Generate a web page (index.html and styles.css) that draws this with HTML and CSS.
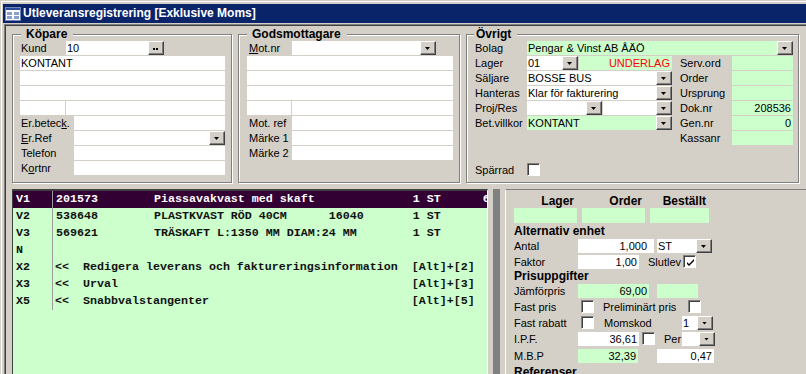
FILE: index.html
```html
<!DOCTYPE html>
<html lang="sv">
<head>
    <meta charset="UTF-8">
    <title>Utleveransregistrering</title>
    <link rel="stylesheet" href="styles.css">
</head>
<body>
<div class="window">
    <div class="titlebar">
        <svg class="title-icon" width="16" height="14" viewBox="0 0 16 14">
            <rect x="0.5" y="0.5" width="15" height="13" fill="#fff" stroke="#6f86b8"/>
            <rect x="1" y="1" width="14" height="2" fill="#2a4a9a"/>
            <rect x="2" y="5" width="5" height="3" fill="#8aa0cc"/>
            <rect x="9" y="5" width="5" height="3" fill="#8aa0cc"/>
            <rect x="2" y="9" width="5" height="3" fill="#8aa0cc"/>
            <rect x="9" y="9" width="5" height="3" fill="#8aa0cc"/>
        </svg>
        <span class="title-text">Utleveransregistrering [Exklusive Moms]</span>
    </div>
    <div class="client">
        <div class="client-inner">

            <!-- huvuduppgifter -->
            <div class="head-area">
                <fieldset class="group kopare">
                    <legend>Köpare</legend>
                    <div class="stack">
                        <div class="r">
                            <span class="lbl w46">Kund</span>
                            <div class="fld w82">10</div>
                            <span class="btn dots"></span>
                        </div>
                        <div class="r"><div class="fld grow">KONTANT</div></div>
                        <div class="r"><div class="fld grow"></div></div>
                        <div class="r"><div class="fld grow"></div></div>
                        <div class="r split">
                            <div class="fld w45"></div>
                            <div class="fld grow"></div>
                        </div>
                        <div class="r">
                            <span class="lbl w54">Er.betec<u>k</u>.</span>
                            <div class="fld grow"></div>
                        </div>
                        <div class="r">
                            <span class="lbl w54"><u>E</u>r.Ref</span>
                            <div class="fld grow sel"><span class="val"></span><span class="btn arrow"></span></div>
                        </div>
                        <div class="r">
                            <span class="lbl w54">Telefon</span>
                            <div class="fld grow"></div>
                        </div>
                        <div class="r">
                            <span class="lbl w54">K<u>o</u>rtnr</span>
                            <div class="fld grow"></div>
                        </div>
                    </div>
                </fieldset>

                <fieldset class="group gods">
                    <legend>Godsmottagare</legend>
                    <div class="stack">
                        <div class="r">
                            <span class="lbl w45"><u>M</u>ot.nr</span>
                            <div class="fld w144 sel"><span class="val"></span><span class="btn arrow"></span></div>
                        </div>
                        <div class="r"><div class="fld grow"></div></div>
                        <div class="r"><div class="fld grow"></div></div>
                        <div class="r"><div class="fld grow"></div></div>
                        <div class="r split">
                            <div class="fld w44"></div>
                            <div class="fld grow"></div>
                        </div>
                        <div class="r">
                            <span class="lbl w45">Mot. ref</span>
                            <div class="fld grow"></div>
                        </div>
                        <div class="r">
                            <span class="lbl w45">Märke 1</span>
                            <div class="fld grow"></div>
                        </div>
                        <div class="r">
                            <span class="lbl w45">Märke 2</span>
                            <div class="fld grow"></div>
                        </div>
                    </div>
                </fieldset>

                <fieldset class="group ovrigt">
                    <legend>Övrigt</legend>
                    <div class="ovr-grid">
                        <span class="lbl">Bolag</span>
                        <div class="fld green sel span3"><span class="val">Pengar &amp; Vinst AB ÅÄÖ</span><span class="btn arrow"></span></div>

                        <span class="lbl">Lager</span>
                        <div class="pair">
                            <div class="fld sel w51"><span class="val">01</span><span class="btn arrow"></span></div>
                            <div class="fld green grow num red">UNDERLAG</div>
                        </div>
                        <span class="lbl right-lbl">Serv.ord</span>
                        <div class="fld green"></div>

                        <span class="lbl">Säljare</span>
                        <div class="fld sel"><span class="val">BOSSE BUS</span><span class="btn arrow"></span></div>
                        <span class="lbl right-lbl">Order</span>
                        <div class="fld green"></div>

                        <span class="lbl">Hanteras</span>
                        <div class="fld sel"><span class="val">Klar för fakturering</span><span class="btn arrow"></span></div>
                        <span class="lbl right-lbl">Ursprung</span>
                        <div class="fld green"></div>

                        <span class="lbl">Proj/Res</span>
                        <div class="pair">
                            <div class="fld sel w75"><span class="val"></span><span class="btn arrow"></span></div>
                            <div class="fld sel grow"><span class="val"></span><span class="btn arrow"></span></div>
                        </div>
                        <span class="lbl right-lbl">Dok.nr</span>
                        <div class="fld green num">208536</div>

                        <span class="lbl">Bet.villkor</span>
                        <div class="fld green sel"><span class="val">KONTANT</span><span class="btn arrow"></span></div>
                        <span class="lbl right-lbl">Gen.nr</span>
                        <div class="fld green num">0</div>

                        <span class="lbl"></span>
                        <span></span>
                        <span class="lbl right-lbl">Kassanr</span>
                        <div class="fld green"></div>
                    </div>
                    <div class="sparr">
                        <span class="lbl w54">Spärrad</span>
                        <span class="chk"></span>
                    </div>
                </fieldset>
            </div>

            <!-- rader och artikeldetaljer -->
            <div class="lower">
                <div class="list">
                    <div class="lrow active"><span class="c1">V1</span><span class="c2">201573        Piassavakvast med skaft              1 ST      6,00</span></div>
                    <div class="lrow"><span class="c1">V2</span><span class="c2">538648        PLASTKVAST RÖD 40CM      16040       1 ST</span></div>
                    <div class="lrow"><span class="c1">V3</span><span class="c2">569621        TRÄSKAFT L:1350 MM DIAM:24 MM        1 ST</span></div>
                    <div class="lrow"><span class="c1">N</span><span class="c2"></span></div>
                    <div class="lrow"><span class="c1">X2</span><span class="c2 x">&lt;&lt;  Redigera leverans och faktureringsinformation  [Alt]+[2]</span></div>
                    <div class="lrow"><span class="c1">X3</span><span class="c2 x">&lt;&lt;  Urval                                          [Alt]+[3]</span></div>
                    <div class="lrow"><span class="c1">X5</span><span class="c2 x">&lt;&lt;  Snabbvalstangenter                             [Alt]+[5]</span></div>
                </div>

                <div class="splitter"><div class="bar"></div></div>

                <div class="panel">
                    <div class="prow head">
                        <span class="colhd w63">Lager</span>
                        <span class="colhd w63">Order</span>
                        <span class="colhd w59">Beställt</span>
                    </div>
                    <div class="prow greens">
                        <div class="fld green w63"></div>
                        <div class="fld green w63"></div>
                        <div class="fld green w59"></div>
                    </div>
                    <div class="prow h15"><span class="sect">Alternativ enhet</span></div>
                    <div class="prow h16">
                        <span class="lbl w64">Antal</span>
                        <div class="fld num w76 pr7">1,000</div>
                        <div class="fld sel w55 ml3"><span class="val">ST</span><span class="btn arrow"></span></div>
                    </div>
                    <div class="prow h15">
                        <span class="lbl w64">Faktor</span>
                        <div class="fld num w61">1,00</div>
                        <span class="lbl ml9">Slutlev</span>
                        <span class="chk checked ml2">
                            <svg width="9" height="9" viewBox="0 0 9 9"><path d="M1 4 L3 6 L8 1 L8 3 L3 8 L1 6 Z" fill="#000"/></svg>
                        </span>
                    </div>
                    <div class="prow h14"><span class="sect">Prisuppgifter</span></div>
                    <div class="prow h15">
                        <span class="lbl w64">Jämförpris</span>
                        <div class="fld green num w71">69,00</div>
                        <div class="fld green w41 ml8"></div>
                    </div>
                    <div class="prow h17">
                        <span class="lbl w64">Fast pris</span>
                        <span class="chk ml3"></span>
                        <span class="lbl w85 ml9">Preliminärt pris</span>
                        <span class="chk"></span>
                    </div>
                    <div class="prow h15">
                        <span class="lbl w64">Fast rabatt</span>
                        <span class="chk ml3"></span>
                        <span class="lbl w78 ml10">Momskod</span>
                        <div class="fld sel w31"><span class="val">1</span><span class="btn arrow"></span></div>
                    </div>
                    <div class="prow h17">
                        <span class="lbl w64">I.P.F.</span>
                        <div class="fld num w61">36,61</div>
                        <span class="chk ml3"></span>
                        <span class="lbl w18 ml9">Per</span>
                        <div class="fld sel w33"><span class="val"></span><span class="btn arrow"></span></div>
                    </div>
                    <div class="prow h17">
                        <span class="lbl w64">M.B.P</span>
                        <div class="fld green num w60">32,39</div>
                        <div class="fld num w57 ml19">0,47</div>
                    </div>
                    <div class="prow h16"><span class="sect">Referenser</span></div>
                </div>
            </div>

        </div>
    </div>
</div>
</body>
</html>
```

FILE: styles.css
```css
/* grundinställningar, Windows klassisk stil */
body {
    margin: 0;
    background: #d4d0c8;
    font: 11px "Liberation Sans", Arial, sans-serif;
    color: #000;
    overflow: hidden;
}

.window {
    width: 830px;
    height: 400px;
    box-sizing: border-box;
    border-top: 1px solid #d4d0c8;
    border-left: 1px solid #d4d0c8;
    padding: 3px 0 0 2px;
    box-shadow: inset 1px 1px 0 #fff;
}

.titlebar {
    height: 19px;
    background: #0a246a;
    color: #fff;
    display: flex;
    align-items: center;
    padding-left: 2px;
}

.title-icon {
    margin-right: 2px;
}

.title-text {
    font: bold 12px/19px "Liberation Sans", Arial, sans-serif;
}

.client {
    margin: 1px 0 0 1px;
    border-top: 1px solid #808080;
    border-left: 1px solid #808080;
}

.client-inner {
    border-top: 1px solid #404040;
    border-left: 1px solid #404040;
}

/* övre delen med grupperna */
.head-area {
    display: flex;
    gap: 6px;
    padding: 1px 0 0 6px;
    height: 156px;
    margin-bottom: 6px;
}

.group {
    margin: 0;
    height: 156px;
    box-sizing: border-box;
    border: 1px solid #808080;
    box-shadow: 1px 1px 0 #fff, inset 1px 1px 0 #fff;
    padding: 0 6px 0 7px;
    min-width: 0;
}

.group legend {
    font: bold 12px/14px "Liberation Sans", Arial, sans-serif;
    background: #d4d0c8;
    padding: 0 6px 0 5px;
    margin-left: 1px;
}

.kopare { width: 220px; }
.gods { width: 222px; padding-left: 8px; }
.gods legend { margin-left: 0; }
.ovrigt { width: 333px; padding-left: 6px; padding-right: 5px; }
.ovrigt legend { margin-left: 1px; padding-left: 2px; }

.stack {
    display: flex;
    flex-direction: column;
    gap: 1px;
}

.r {
    display: flex;
    height: 14px;
}

.split { gap: 1px; }

.lbl {
    line-height: 14px;
    white-space: nowrap;
    padding-left: 1px;
    box-sizing: border-box;
}

.gods .lbl, .ovrigt .lbl { padding-left: 2px; }
.ovrigt .right-lbl { padding-left: 8px; }

/* fält */
.fld {
    height: 14px;
    line-height: 14px;
    background: #fff;
    box-sizing: border-box;
    padding: 0 2px 0 1px;
    white-space: nowrap;
    overflow: hidden;
}

.fld.green { background: #ccffcc; }
.fld.num { text-align: right; }
.fld.red { color: #ff0000; }
.grow { flex: 1; }

.sel {
    display: flex;
    padding-right: 0;
}

.sel .val { flex: 1; }

.btn {
    width: 16px;
    height: 14px;
    flex: none;
    box-sizing: border-box;
    background: #d4d0c8;
    border: 1px solid;
    border-color: #fff #404040 #404040 #fff;
    box-shadow: inset -1px -1px 0 #808080;
    display: flex;
    align-items: center;
    justify-content: center;
}

.btn.arrow::after {
    content: "";
    width: 5px;
    height: 3px;
    background: #000;
    clip-path: polygon(0 0, 100% 0, 50% 100%);
    margin: 1px 1px 0 0;
}

.btn.dots::after {
    content: "";
    width: 2px;
    height: 2px;
    background: #000;
    box-shadow: 3px 0 0 #000;
    margin: 1px 4px 0 0;
}

.ovr-grid {
    display: grid;
    grid-template-columns: 54px 145px 60px 61px;
    grid-auto-rows: 14px;
    row-gap: 1px;
}

.span3 { grid-column: span 3; }

.pair {
    display: flex;
    gap: 1px;
}

.sparr {
    display: flex;
    align-items: center;
    margin-top: 18px;
    height: 13px;
}

.chk {
    width: 13px;
    height: 13px;
    flex: none;
    box-sizing: border-box;
    background: #fff;
    border: 1px solid;
    border-color: #808080 #fff #fff #808080;
    box-shadow: inset 1px 1px 0 #404040;
    display: flex;
    align-items: center;
    justify-content: center;
}

.chk svg { margin: 1px 0 0 1px; }

/* nedre delen */
.lower {
    display: flex;
    height: 190px;
    padding-left: 6px;
}

.list {
    width: 476px;
    flex: none;
    box-sizing: border-box;
    border-style: solid;
    border-width: 2px 1px 0 1px;
    border-color: #404040 #fff #404040 #404040;
    background: #ccffcc;
    font: bold 11.67px "Liberation Mono", "Courier New", monospace;
    overflow: hidden;
}

.lrow {
    display: flex;
    height: 17px;
    line-height: 17px;
    color: #111;
}

.lrow.active {
    background: #330033;
    color: #fff;
}

.c1 {
    width: 40px;
    flex: none;
    box-sizing: border-box;
    padding-left: 3px;
    border-right: 1px solid #9a9a9a;
}

.c2 {
    padding-left: 3px;
    white-space: pre;
}

.c2.x { padding-left: 2px; }

.splitter {
    width: 17px;
    flex: none;
    padding-left: 5px;
    box-sizing: border-box;
}

.splitter .bar {
    width: 7px;
    height: 100%;
    background: #808080;
}

.panel {
    flex: 1;
    border-top: 1px solid #808080;
    border-left: 1px solid #fff;
    padding: 3px 0 0 8px;
}

.prow {
    display: flex;
    align-items: center;
}

.prow.head { height: 15px; }
.prow.greens { height: 15px; gap: 5px; align-items: stretch; }
.prow.greens .fld { height: 15px; }

.colhd {
    font-weight: bold;
    font-size: 12px;
    text-align: right;
    padding-right: 3px;
    box-sizing: border-box;
}

.colhd + .colhd { margin-left: 5px; }

.sect {
    font-weight: bold;
    font-size: 12px;
}

.h14 { height: 14px; }
.h15 { height: 15px; }
.h16 { height: 16px; }
.h17 { height: 17px; }

.w18 { width: 18px; }
.w31 { width: 31px; }
.w33 { width: 33px; }
.w41 { width: 41px; }
.w44 { width: 44px; flex: none; }
.w45 { width: 45px; flex: none; }
.w46 { width: 46px; flex: none; }
.w51 { width: 51px; }
.w54 { width: 54px; flex: none; }
.w55 { width: 55px; }
.w57 { width: 57px; }
.w59 { width: 59px; }
.w60 { width: 60px; }
.w61 { width: 61px; }
.w63 { width: 63px; }
.w64 { width: 64px; flex: none; }
.w71 { width: 71px; }
.w75 { width: 75px; }
.w76 { width: 76px; }
.w78 { width: 78px; }
.w82 { width: 82px; }
.w85 { width: 85px; }
.w144 { width: 144px; }

.ml2 { margin-left: 2px; }
.ml3 { margin-left: 3px; }
.ml8 { margin-left: 8px; }
.ml9 { margin-left: 9px; }
.ml10 { margin-left: 10px; }
.ml19 { margin-left: 19px; }
.pr7 { padding-right: 7px; }

.panel .lbl { padding-left: 0; }
```
